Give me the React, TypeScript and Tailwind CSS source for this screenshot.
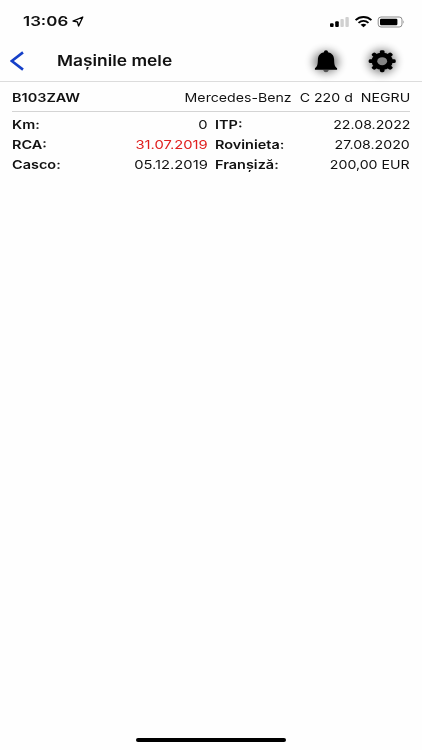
import type { ReactNode } from "react";

const fields = [
  { label: "Km:", value: "0", label2: "ITP:", value2: "22.08.2022" },
  { label: "RCA:", value: "31.07.2019", expired: true, label2: "Rovinieta:", value2: "27.08.2020" },
  { label: "Casco:", value: "05.12.2019", label2: "Franșiză:", value2: "200,00 EUR" },
];

const teeth = [0, 45, 90, 135, 180, 225, 270, 315];

function Label({ children }: { children: ReactNode }) {
  return (
    <span className="origin-left scale-x-[1.205] whitespace-pre font-semibold">{children}</span>
  );
}

function Value({ children, className = "scale-x-[1.18]" }: { children: ReactNode; className?: string }) {
  return <span className={`origin-right whitespace-pre ${className}`}>{children}</span>;
}

function StatusBar() {
  return (
    <div className="flex h-[41px] items-center justify-between pt-[2px] pr-[17px] pl-[23px]">
      <div className="flex items-center">
        <span className="w-[49px] text-[13.5px] font-semibold">
          <span className="inline-block origin-left scale-x-[1.25]">13:06</span>
        </span>
        <svg width="12" height="11" viewBox="0 0 12 11" fill="none">
          <path d="M10.8 1 1 5.1 5.4 5.9 6.6 10Z" stroke="black" strokeWidth="1.3" strokeLinejoin="round" />
        </svg>
      </div>

      <svg width="76" height="14" viewBox="0 0 76 14" className="mb-[2px]">
        {/* Signal */}
        <rect x="1" y="9.3" width="3.6" height="3.7" rx="1" />
        <rect x="6.2" y="7.3" width="3.6" height="5.7" rx="1" />
        <rect x="11.4" y="5" width="3.4" height="8" rx="1" fill="#d0d0d0" />
        <rect x="16.4" y="3" width="3.4" height="10" rx="1" fill="#d0d0d0" />
        {/* Wifi */}
        <g fill="none" stroke="black" strokeWidth="1.9">
          <path d="M26.6 6.1C31 1.9 38 1.9 42.4 6.1" />
          <path d="M29.5 8.9C32.5 6.3 36.5 6.3 39.5 8.9" />
        </g>
        <path d="M31.6 10.7C33.3 9.3 35.7 9.3 37.4 10.7L34.5 13.2Z" />
        {/* Battery */}
        <rect x="49.2" y="3" width="23.8" height="10" rx="2.8" fill="none" stroke="#8b8b8b" />
        <rect x="51" y="4.8" width="17.4" height="6.4" rx="1.2" />
        <path d="M74.3 6.3q1.6 1.7 0 3.4Z" fill="#8b8b8b" />
      </svg>
    </div>
  );
}

function Bell() {
  return (
    <svg width="56" height="41" viewBox="0 0 56 41" className="overflow-visible">
      <ellipse cx="28" cy="21" rx="13" ry="11" fill="black" opacity="0.45" className="blur-[4px]" />
      <path d="M25.2 29h5.6q-.6 2.3-2.8 2.3t-2.8-2.3Z" fill="#555" />
      <path d="M28 9.3c1.3 0 2 .8 2 1.9 4.5 1 6 4 6.1 7.4.1 4.5.4 7 3 8.7v1.5H16.9v-1.5c2.6-1.7 2.9-4.2 3-8.7.1-3.4 1.6-6.4 6.1-7.4 0-1.1.7-1.9 2-1.9Z" />
    </svg>
  );
}

function Gear() {
  return (
    <svg width="56" height="41" viewBox="0 0 56 41" className="overflow-visible">
      <ellipse cx="28" cy="20.5" rx="14" ry="12" fill="black" opacity="0.45" className="blur-[4px]" />
      <g transform="translate(28.2 20.2) scale(1.23 1)">
        <circle r="8.6" />
        {teeth.map((a) => (
          <rect key={a} x="-1.9" y="-11" width="3.8" height="6" rx="1.4" transform={`rotate(${a})`} />
        ))}
        <circle r="4" fill="#858585" />
      </g>
    </svg>
  );
}

export default function App() {
  return (
    <div className="flex h-[750px] w-[422px] flex-col overflow-hidden bg-[#fefefe] font-['Inter',sans-serif] text-[#111]">
      <StatusBar />

      <header className="flex h-[41px] items-center border-b border-[#dcdcdc] pr-3 pl-[10px]">
        <svg width="14" height="20" viewBox="0 0 14 20" fill="none" className="mr-[33px]">
          <path d="M13 1.4 1.8 10 13 18.6" stroke="#1640c8" strokeWidth="2.6" />
        </svg>
        <h1 className="flex-1 pt-px text-[15px] font-semibold">
          <span className="inline-block origin-left scale-x-[1.158]">Mașinile mele</span>
        </h1>
        <Bell />
        <Gear />
      </header>

      <main className="flex-1 px-3 text-[12px] leading-5">
        <div className="flex h-[30px] items-center justify-between border-b border-[#d4d4d4] pt-[3px]">
          <Label>B103ZAW</Label>
          <Value>{"Mercedes-Benz  C 220 d  NEGRU"}</Value>
        </div>
        <div className="pt-[3px]">
          {fields.map((f) => (
            <div key={f.label} className="grid grid-cols-2 gap-[7px]">
              <div className="flex justify-between">
                <Label>{f.label}</Label>
                <Value className={f.expired ? "scale-x-[1.23] text-[#e0201f]" : "scale-x-[1.23]"}>
                  {f.value}
                </Value>
              </div>
              <div className="flex justify-between">
                <Label>{f.label2}</Label>
                <Value>{f.value2}</Value>
              </div>
            </div>
          ))}
        </div>
      </main>

      {/* Home indicator */}
      <div className="mb-2 h-1 w-[150px] self-center rounded-full bg-black" />
    </div>
  );
}
